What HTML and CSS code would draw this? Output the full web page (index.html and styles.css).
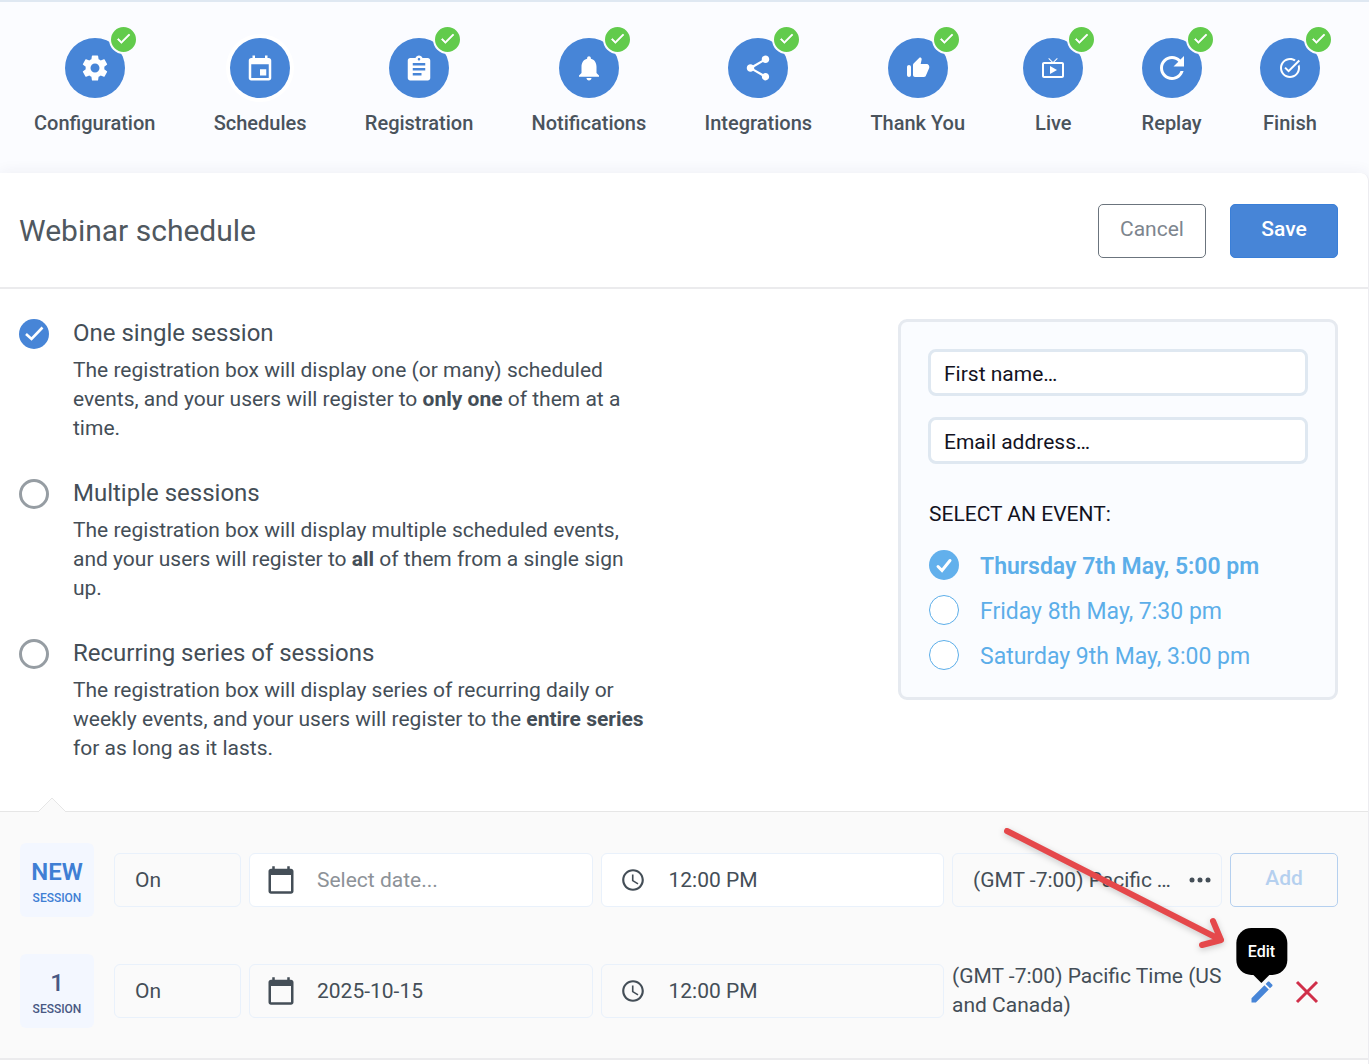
FILE: index.html
```html
<!DOCTYPE html>
<html lang="en">
<head>
<meta charset="utf-8">
<meta name="viewport" content="width=device-width, initial-scale=1">
<title>Webinar schedule</title>
<link rel="stylesheet" href="styles.css">
</head>
<body>
<svg class="sprite" aria-hidden="true">
  <symbol id="check" viewBox="0 0 24 24"><path d="M9 16.17 4.83 12l-1.42 1.41L9 19 21 7l-1.41-1.41z" stroke="currentColor" stroke-width="1"/></symbol>
  <symbol id="calendar" viewBox="0 0 24 24"><path d="M20 3h-1V1h-2v2H7V1H5v2H4c-1.1 0-2 .9-2 2v16c0 1.1.9 2 2 2h16c1.1 0 2-.9 2-2V5c0-1.1-.9-2-2-2zm0 18H4V8h16v13z"/></symbol>
  <symbol id="clock" viewBox="0 0 24 24"><path d="M11.99 2C6.47 2 2 6.48 2 12s4.47 10 9.99 10C17.52 22 22 17.52 22 12S17.52 2 11.99 2zM12 20c-4.42 0-8-3.58-8-8s3.58-8 8-8 8 3.58 8 8-3.58 8-8 8zm.5-13H11v6l5.25 3.15.75-1.23-4.5-2.67z"/></symbol>
</svg>

<nav class="steps" aria-label="Webinar setup">
  <a class="step" href="#configuration">
    <span class="step-icon"><svg viewBox="0 0 24 24"><path d="M19.43 12.98c.04-.32.07-.64.07-.98s-.03-.66-.07-.98l2.11-1.65c.19-.15.24-.42.12-.64l-2-3.46c-.12-.22-.39-.3-.61-.22l-2.49 1c-.52-.4-1.08-.73-1.69-.98l-.38-2.65C14.46 2.18 14.25 2 14 2h-4c-.25 0-.46.18-.49.42l-.38 2.65c-.61.25-1.17.59-1.69.98l-2.49-1c-.23-.09-.49 0-.61.22l-2 3.46c-.13.22-.07.49.12.64l2.11 1.65c-.04.32-.07.65-.07.98s.03.66.07.98l-2.11 1.65c-.19.15-.24.42-.12.64l2 3.46c.12.22.39.3.61.22l2.49-1c.52.4 1.08.73 1.69.98l.38 2.65c.03.24.24.42.49.42h4c.25 0 .46-.18.49-.42l.38-2.65c.61-.25 1.17-.59 1.69-.98l2.49 1c.23.09.49 0 .61-.22l2-3.46c.12-.22.07-.49-.12-.64l-2.11-1.65zM12 15.6c-1.98 0-3.6-1.62-3.6-3.6s1.62-3.6 3.6-3.6 3.6 1.62 3.6 3.6-1.62 3.6-3.6 3.6z"/></svg><span class="done"><svg><use href="#check"/></svg></span></span>
    Configuration
  </a>
  <a class="step" href="#schedules" aria-current="step">
    <span class="step-icon step-icon-current"><svg viewBox="0 0 24 24"><path d="M17 13h-5v5h5v-5zM16 2v2H8V2H6v2H5c-1.11 0-1.99.9-1.99 2L3 20c0 1.1.89 2 2 2h14c1.1 0 2-.9 2-2V6c0-1.1-.9-2-2-2h-1V2h-2zm3 18H5V9h14v11z"/></svg></span>
    Schedules
  </a>
  <a class="step" href="#registration">
    <span class="step-icon"><svg viewBox="0 -1 24 24"><path d="M19 3h-4.18C14.4 1.84 13.3 1 12 1c-1.3 0-2.4.84-2.82 2H5c-1.1 0-2 .9-2 2v14c0 1.1.9 2 2 2h14c1.1 0 2-.9 2-2V5c0-1.1-.9-2-2-2zm-7 0c.55 0 1 .45 1 1s-.45 1-1 1-1-.45-1-1 .45-1 1-1zm2 14H7v-2h7v2zm3-4H7v-2h10v2zm0-4H7V7h10v2z"/></svg><span class="done"><svg><use href="#check"/></svg></span></span>
    Registration
  </a>
  <a class="step" href="#notifications">
    <span class="step-icon"><svg viewBox="0 0 24 24"><path d="M12 22c1.1 0 2-.9 2-2h-4c0 1.1.89 2 2 2zm6-6v-5c0-3.07-1.64-5.64-4.5-6.32V4c0-.83-.67-1.5-1.5-1.5s-1.5.67-1.5 1.5v.68C7.63 5.36 6 7.92 6 11v5l-2 2v1h16v-1l-2-2z"/></svg><span class="done"><svg><use href="#check"/></svg></span></span>
    Notifications
  </a>
  <a class="step" href="#integrations">
    <span class="step-icon"><svg viewBox="0 0 24 24"><path d="M18 16.08c-.76 0-1.44.3-1.96.77L8.91 12.7c.05-.23.09-.46.09-.7s-.04-.47-.09-.7l7.05-4.11c.54.5 1.25.81 2.04.81 1.66 0 3-1.34 3-3s-1.34-3-3-3-3 1.34-3 3c0 .24.04.47.09.7L8.04 9.81C7.5 9.31 6.79 9 6 9c-1.66 0-3 1.34-3 3s1.34 3 3 3c.79 0 1.5-.31 2.04-.81l7.12 4.16c-.05.21-.08.43-.08.65 0 1.61 1.31 2.92 2.92 2.92s2.92-1.31 2.92-2.92-1.31-2.92-2.92-2.92z"/></svg><span class="done"><svg><use href="#check"/></svg></span></span>
    Integrations
  </a>
  <a class="step" href="#thank-you">
    <span class="step-icon step-icon-small"><svg viewBox="0 0 24 24"><path d="M13.12 2.06 7.58 7.6C7.21 7.97 7 8.48 7 9.01V19c0 1.1.9 2 2 2h9c.8 0 1.52-.48 1.84-1.21l3.26-7.61C23.94 10.2 22.49 8 20.34 8h-5.65l.95-4.58c.1-.5-.05-1.01-.41-1.37-.59-.58-1.53-.58-2.11.01zM3 21c1.1 0 2-.9 2-2v-8c0-1.1-.9-2-2-2s-2 .9-2 2v8c0 1.1.9 2 2 2z"/></svg><span class="done"><svg><use href="#check"/></svg></span></span>
    Thank You
  </a>
  <a class="step" href="#live">
    <span class="step-icon step-icon-small"><svg viewBox="0 0 24 24"><path d="M21 6h-7.59l3.29-3.29L16 2l-4 4-4-4-.7.71L10.59 6H3c-1.1 0-2 .89-2 2v12c0 1.1.9 2 2 2h18c1.1 0 2-.9 2-2V8c0-1.11-.9-2-2-2zm0 14H3V8h18v12zM9 10v8l7-4z"/></svg><span class="done"><svg><use href="#check"/></svg></span></span>
    Live
  </a>
  <a class="step" href="#replay">
    <span class="step-icon step-icon-large"><svg viewBox="0 0 24 24"><path d="M17.65 6.35C16.2 4.9 14.21 4 12 4c-4.42 0-7.99 3.58-7.99 8s3.57 8 7.99 8c3.73 0 6.84-2.55 7.73-6h-2.08c-.82 2.33-3.04 4-5.65 4-3.31 0-6-2.69-6-6s2.69-6 6-6c1.66 0 3.14.69 4.22 1.78L13 11h7V4l-2.35 2.35z"/></svg><span class="done"><svg><use href="#check"/></svg></span></span>
    Replay
  </a>
  <a class="step" href="#finish">
    <span class="step-icon step-icon-small"><svg viewBox="0 0 24 24"><path d="M22 5.18 10.59 16.6l-4.24-4.24 1.41-1.41 2.83 2.83 10-10L22 5.18zm-2.21 5.04c.13.57.21 1.17.21 1.78 0 4.42-3.58 8-8 8s-8-3.58-8-8 3.58-8 8-8c1.58 0 3.04.46 4.28 1.25l1.44-1.44C16.1 2.67 14.13 2 12 2 6.48 2 2 6.48 2 12s4.48 10 10 10 10-4.48 10-10c0-1.19-.22-2.33-.6-3.39l-1.61 1.61z"/></svg><span class="done"><svg><use href="#check"/></svg></span></span>
    Finish
  </a>
</nav>

<main class="card">
  <header class="card-head">
    <h1>Webinar schedule</h1>
    <div class="card-actions">
      <button class="btn btn-cancel" type="button">Cancel</button>
      <button class="btn btn-save" type="button">Save</button>
    </div>
  </header>

  <section class="setup">
    <div class="options">
      <label class="option">
        <input class="option-radio" type="radio" name="type" checked>
        <span class="option-body">
          <span class="option-title">One single session</span>
          <span class="option-text">The registration box will display one (or many) scheduled events, and your users will register to <b>only one</b> of them at a time.</span>
        </span>
      </label>
      <label class="option">
        <input class="option-radio" type="radio" name="type">
        <span class="option-body">
          <span class="option-title">Multiple sessions</span>
          <span class="option-text">The registration box will display multiple scheduled events, and your users will register to <b>all</b> of them from a single sign up.</span>
        </span>
      </label>
      <label class="option">
        <input class="option-radio" type="radio" name="type">
        <span class="option-body">
          <span class="option-title">Recurring series of sessions</span>
          <span class="option-text">The registration box will display series of recurring daily or weekly events, and your users will register to the <b>entire series</b> for as long as it lasts.</span>
        </span>
      </label>
    </div>

    <form class="preview">
      <input class="preview-input" type="text" placeholder="First name…" aria-label="First name">
      <input class="preview-input" type="email" placeholder="Email address…" aria-label="Email address">
      <fieldset class="events">
        <legend>SELECT AN EVENT:</legend>
        <label class="event"><input class="event-radio" type="radio" name="event" checked><span>Thursday 7th May, 5:00 pm</span></label>
        <label class="event"><input class="event-radio" type="radio" name="event"><span>Friday 8th May, 7:30 pm</span></label>
        <label class="event"><input class="event-radio" type="radio" name="event"><span>Saturday 9th May, 3:00 pm</span></label>
      </fieldset>
    </form>
  </section>

  <section class="sessions">
    <svg class="notch" viewBox="0 0 28 15" aria-hidden="true"><path d="M1 14 14 1l13 13v1H1z" fill="#fafafa"/><path d="M1 14 14 1l13 13" fill="none" stroke="#e6e6e6"/></svg>
    <div class="row">
      <div class="tag tag-new"><strong>NEW</strong><span>SESSION</span></div>
      <select class="field" aria-label="Repeat"><option>On</option></select>
      <label class="field field-icon field-open"><svg class="icon-calendar"><use href="#calendar"/></svg><input type="text" placeholder="Select date..." aria-label="Date"></label>
      <label class="field field-icon field-open"><svg class="icon-clock"><use href="#clock"/></svg><input type="text" value="12:00 PM" aria-label="Time"></label>
      <button class="field zone" type="button"><span class="zone-name">(GMT -7:00) Pacific Time (US and Canada)</span><svg class="dots" viewBox="0 0 22 6"><circle cx="3" cy="3" r="2.5"/><circle cx="11" cy="3" r="2.5"/><circle cx="19" cy="3" r="2.5"/></svg></button>
      <button class="btn btn-add" type="button" disabled>Add</button>
    </div>
    <div class="row">
      <div class="tag"><strong>1</strong><span>SESSION</span></div>
      <select class="field" aria-label="Repeat"><option>On</option></select>
      <label class="field field-icon"><svg class="icon-calendar"><use href="#calendar"/></svg><input type="text" value="2025-10-15" aria-label="Date"></label>
      <label class="field field-icon"><svg class="icon-clock"><use href="#clock"/></svg><input type="text" value="12:00 PM" aria-label="Time"></label>
      <div class="zone-text">(GMT -7:00) Pacific Time (US and Canada)</div>
      <div class="row-actions">
        <button class="icon-btn edit" type="button" aria-label="Edit"><svg viewBox="0 0 24 24"><path d="M3 17.25V21h3.75L17.81 9.94l-3.75-3.75L3 17.25zM20.71 7.04c.39-.39.39-1.02 0-1.41l-2.34-2.34c-.39-.39-1.02-.39-1.41 0l-1.83 1.83 3.75 3.75 1.83-1.83z"/></svg><span class="tooltip" role="tooltip">Edit</span></button>
        <button class="icon-btn delete" type="button" aria-label="Delete"><svg viewBox="0 0 28 28"><path d="m4 4 20 20M24 4 4 24" fill="none" stroke="currentColor" stroke-width="3"/></svg></button>
      </div>
    </div>
    <svg class="pointer" viewBox="0 0 228 128" aria-hidden="true"><path d="m8 8 214 109m-8-19 8 19-19 5" fill="none" stroke="#e5484b" stroke-width="6" stroke-linecap="round" stroke-linejoin="round"/></svg>
  </section>
</main>
</body>
</html>
```
FILE: styles.css
```css
* {
  box-sizing: border-box;
}

body {
  margin: 0;
  min-height: 100vh;
  display: flex;
  flex-direction: column;
  background: #fbfcff;
  border-top: 2px solid #dfe8f2;
  color: #444e57;
  font: 21px/29px Roboto, sans-serif;
}

input,
select,
button {
  font: inherit;
  color: inherit;
}

svg {
  fill: currentColor;
}

.sprite {
  display: none;
}

/* Step navigation */
.steps {
  display: flex;
  justify-content: space-between;
  padding: 36px 49px 35px 34px;
}

.step {
  display: flex;
  flex-direction: column;
  align-items: center;
  gap: 10px;
  color: #4a535c;
  font-size: 20px;
  font-weight: 500;
  line-height: 30px;
  text-decoration: none;
  white-space: nowrap;
}

.step-icon {
  position: relative;
  display: grid;
  place-items: center;
  width: 60px;
  height: 60px;
  border-radius: 50%;
  background: #4785d7;
  color: #fff;
}

.step-icon > svg {
  width: 30px;
  height: 30px;
}

.step-icon-small > svg {
  width: 24px;
  height: 24px;
}

.step-icon-large > svg {
  width: 36px;
  height: 36px;
}

.step-icon-current {
  box-shadow: 0 0 0 4px #fff;
}

.done {
  position: absolute;
  top: -13px;
  right: -13px;
  display: grid;
  place-items: center;
  width: 29px;
  height: 29px;
  padding-bottom: 3px;
  border: 2px solid #fbfcff;
  border-radius: 50%;
  background: #62cb4c;
}

.done svg {
  width: 17px;
  height: 17px;
}

/* Card */
.card {
  flex: 1;
  background: #fff;
  border-right: 1px solid #ececf0;
  border-top-right-radius: 8px;
  box-shadow: 0 0 16px rgba(40, 40, 80, 0.07);
}

.card-head {
  display: flex;
  justify-content: space-between;
  align-items: center;
  padding: 31px 30px 29px 19px;
  border-bottom: 2px solid #ebebed;
}

h1 {
  margin: 0;
  font-size: 30px;
  font-weight: 400;
  line-height: 44px;
  color: #50585f;
}

.card-actions {
  display: flex;
  gap: 24px;
}

.btn {
  height: 54px;
  width: 108px;
  padding: 0 0 4px;
  border: 1px solid;
  border-radius: 5px;
  font-weight: 500;
}

.btn-cancel {
  background: #fff;
  border-color: #6b747d;
  color: #7d858e;
  font-weight: 400;
}

.btn-save {
  background: #4785d7;
  border-color: #3a7fd8;
  color: #fff;
}

.btn-add {
  background: transparent;
  border-color: #b5d0ef;
  color: #b5d0ef;
}

/* Session type and form preview */
.setup {
  display: flex;
  justify-content: space-between;
  align-items: flex-start;
  gap: 40px;
  padding: 26px 30px 48px 19px;
}

.options {
  display: flex;
  flex-direction: column;
  gap: 32px;
  flex: 0 1 632px;
}

.option {
  display: flex;
  gap: 24px;
}

.option-radio,
.event-radio {
  appearance: none;
  flex: none;
  width: 30px;
  height: 30px;
  margin: 4px 0 0;
  border: 3px solid #969da3;
  border-radius: 50%;
  background: #fff center / 24px no-repeat;
}

.option-radio:checked {
  border: 0;
  background-color: #4785d7;
  background-image: url("data:image/svg+xml,%3Csvg xmlns='http://www.w3.org/2000/svg' viewBox='0 0 24 24'%3E%3Cpath d='M4 12l5.500 5L20.500 5.500' fill='none' stroke='white' stroke-width='2.600'/%3E%3C/svg%3E");
}

.option-body {
  display: flex;
  flex-direction: column;
  gap: 5px;
}

.option-title {
  font-size: 24px;
  line-height: 36px;
}

.preview {
  flex: none;
  display: flex;
  flex-direction: column;
  gap: 21px;
  width: 440px;
  margin-top: 4px;
  padding: 27px 27px 20px;
  border: 3px solid #e6eaf0;
  border-radius: 9px;
  background: #fafcff;
}

.preview-input {
  width: 100%;
  height: 47px;
  padding: 2px 13px 0;
  border: 3px solid #dfe8f1;
  border-radius: 8px;
  background: #fff;
}

.preview-input::placeholder {
  color: #13131f;
  opacity: 1;
}

.events {
  margin: 0;
  padding: 15px 1px 0;
  border: 0;
}

.events legend {
  float: left;
  width: 100%;
  margin-bottom: 13px;
  padding: 0;
  color: #13131f;
}

.event {
  clear: both;
  display: flex;
  align-items: center;
  gap: 21px;
  height: 45px;
  color: #5caee9;
  font-size: 23px;
}

.event span {
  padding-top: 3px;
}

.event-radio {
  margin: 0;
  border: 1px solid #5caee9;
}

.event-radio:checked {
  border: 0;
  background-color: #62b0ec;
  background-image: url("data:image/svg+xml,%3Csvg xmlns='http://www.w3.org/2000/svg' viewBox='0 0 24 24'%3E%3Cpath d='M6 13.500l4 4L18 7.500' fill='none' stroke='white' stroke-width='3' stroke-linecap='round'/%3E%3C/svg%3E");
}

.event-radio:checked + span {
  font-weight: 600;
}

/* Sessions */
.sessions {
  position: relative;
  display: flex;
  flex-direction: column;
  gap: 37px;
  padding: 31px 30px 30px 20px;
  background: #fafafa;
  border-top: 1px solid #e6e6e6;
  border-bottom: 2px solid #ebebed;
}

.notch {
  position: absolute;
  left: 38px;
  top: -15px;
  width: 28px;
  height: 15px;
}

.row {
  display: grid;
  grid-template-columns: 86px 127px minmax(0, 1fr) minmax(0, 1fr) 270px 108px;
  gap: 8px;
  align-items: center;
}

.tag {
  display: flex;
  flex-direction: column;
  align-items: center;
  width: 74px;
  height: 74px;
  padding-top: 14px;
  border-radius: 6px;
  background: #f3f7ff;
  color: #485883;
  font-size: 12px;
  font-weight: 500;
  line-height: 22px;
}

.tag strong {
  font-size: 24px;
  font-weight: 500;
  line-height: 30px;
}

.tag-new {
  color: #3f7fd4;
}

.tag-new strong {
  font-weight: 600;
}

.field {
  width: 100%;
  height: 54px;
  padding: 0 20px;
  border: 1px solid #e9f1fb;
  border-radius: 6px;
  background: #fafafa;
  appearance: none;
}

.field-open {
  background: #fff;
}

.field-icon {
  display: flex;
  align-items: center;
  gap: 21px;
  padding: 0 16px;
}

.field-icon svg {
  flex: none;
}

.field-icon input {
  flex: 1;
  min-width: 0;
  padding: 0;
  border: 0;
  background: none;
}

.field-icon input::placeholder {
  color: #8d9298;
  opacity: 1;
}

.icon-calendar {
  width: 30px;
  height: 30px;
}

.icon-clock {
  width: 30px;
  height: 26px;
}

.zone {
  display: flex;
  align-items: center;
  gap: 12px;
  padding: 0 10px 0 20px;
}

.zone-name {
  flex: 1;
  overflow: hidden;
  text-align: left;
  text-overflow: ellipsis;
  white-space: nowrap;
}

.dots {
  flex: none;
  width: 22px;
  height: 6px;
}

.row-actions {
  display: flex;
  justify-content: center;
  gap: 17px;
  padding-top: 2px;
}

.icon-btn {
  position: relative;
  display: block;
  width: 28px;
  height: 28px;
  padding: 0;
  border: 0;
  background: none;
}

.icon-btn > svg {
  display: block;
  width: 28px;
  height: 28px;
}

.edit {
  color: #4785d7;
}

.delete {
  color: #d02f49;
}

.tooltip {
  position: absolute;
  bottom: 31px;
  left: 50%;
  transform: translateX(-50%);
  padding: 9px 12px;
  border-radius: 15px;
  background: #000;
  color: #fff;
  font-size: 16px;
  font-weight: 500;
}

.tooltip::after {
  content: "";
  position: absolute;
  top: 100%;
  left: 50%;
  margin-left: -8px;
  border: 8px solid transparent;
  border-top-color: #000;
  border-bottom: 0;
}

.pointer {
  position: absolute;
  right: 141px;
  top: 11px;
  width: 228px;
  height: 128px;
  pointer-events: none;
  filter: drop-shadow(0 2px 3px rgba(0, 0, 0, 0.2));
}
```
